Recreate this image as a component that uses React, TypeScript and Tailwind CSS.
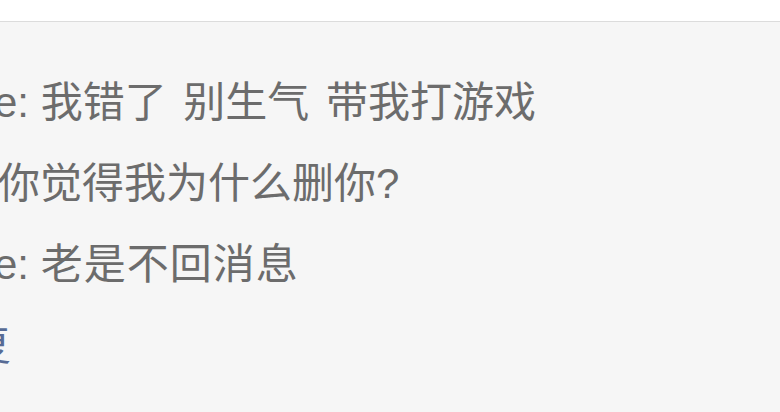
export default function App() {
  const font = {
    fontFamily: '"Liberation Sans", "Noto Sans CJK SC", sans-serif',
  };
  return (
    <div className="w-[780px] h-[412px] overflow-hidden flex flex-col bg-[#f6f6f6]" style={font}>
      <div className="h-[22px] shrink-0 bg-white border-b border-[#dcdcdc]" />
      <div className="flex-1 pt-[40px] text-[42px] leading-[81px] text-[#6c6c6c] whitespace-nowrap">
        <div className="ml-[-6px]">
          e: 我错了<span className="[word-spacing:5px]"> 别生气 </span>带我打游戏
        </div>
        <div className="ml-[-2px]">你觉得我为什么删你?</div>
        <div className="ml-[-6px]">
          e: <span className="tracking-[1px]">老是不回消息</span>
        </div>
        <div className="ml-[-31px] text-[#576b95]">复</div>
      </div>
    </div>
  );
}
